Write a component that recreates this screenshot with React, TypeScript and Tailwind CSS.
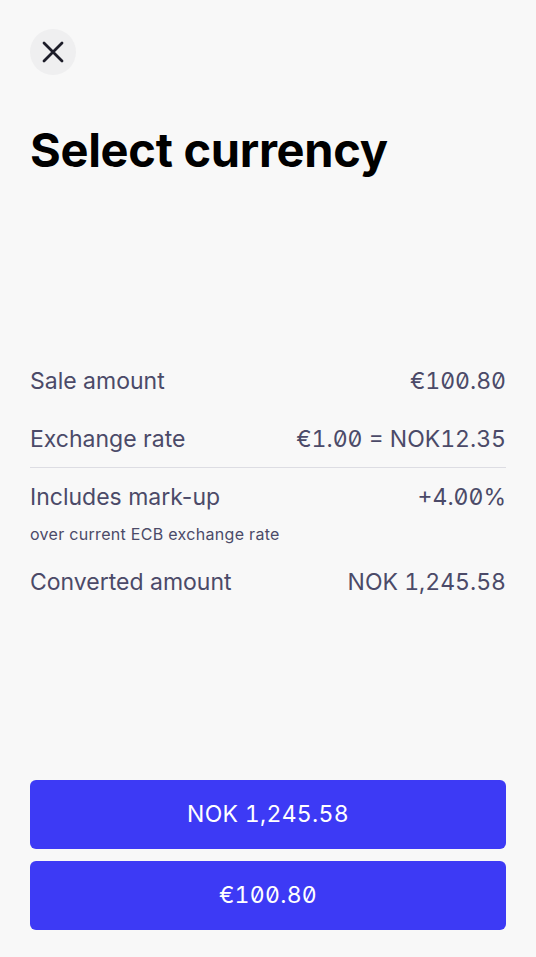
import * as React from "react"

function Row({ label, value }: { label: string; value: string }) {
  return (
    <div className="flex items-center justify-between h-[28px]">
      <span className="text-[23px]">{label}</span>
      <span className="text-[23px] tabular-nums slashed-zero">{value}</span>
    </div>
  )
}

export default function App() {
  return (
    <div
      className="min-h-[957px] flex flex-col bg-[#f8f8f8] px-[30px] text-[#4b4a68]"
      style={{ fontFamily: "Inter, 'Noto Sans', sans-serif" }}
    >
      <button className="mt-[29px] w-[46px] h-[46px] rounded-full bg-[#efeff0] flex items-center justify-center text-[#1d1d29]">
        <svg width="24" height="24" viewBox="0 0 24 24" fill="none" stroke="currentColor" strokeWidth="2.8" strokeLinecap="round">
          <path d="M3 3l18 18M21 3L3 21" />
        </svg>
      </button>
      <h1 className="mt-[47px] text-[47px] leading-[56px] font-bold text-black tracking-[-0.3px]">
        Select currency
      </h1>

      <div className="mt-[189px] flex flex-col">
        <Row label="Sale amount" value="€100.80" />
        <div className="mt-[30px]">
          <Row label="Exchange rate" value="€1.00 = NOK12.35" />
        </div>
        <div className="mt-[14px] h-px bg-[#dddde3]" />
        <div className="mt-[15px]">
          <Row label="Includes mark-up" value="+4.00%" />
        </div>
        <div className="mt-[13px] text-[16px] leading-[20px] tracking-[0.3px]">over current ECB exchange rate</div>
        <div className="mt-[24px]">
          <Row label="Converted amount" value="NOK 1,245.58" />
        </div>
      </div>

      <div className="flex-1" />

      <div className="flex flex-col gap-[12px] pb-[27px]">
        <button className="h-[69px] rounded-[6px] bg-[#3d3af5] text-white text-[23px] font-normal tabular-nums slashed-zero tracking-[0.3px]">
          NOK 1,245.58
        </button>
        <button className="h-[69px] rounded-[6px] bg-[#3d3af5] text-white text-[23px] font-normal tabular-nums slashed-zero tracking-[0.3px]">
          €100.80
        </button>
      </div>
    </div>
  )
}
